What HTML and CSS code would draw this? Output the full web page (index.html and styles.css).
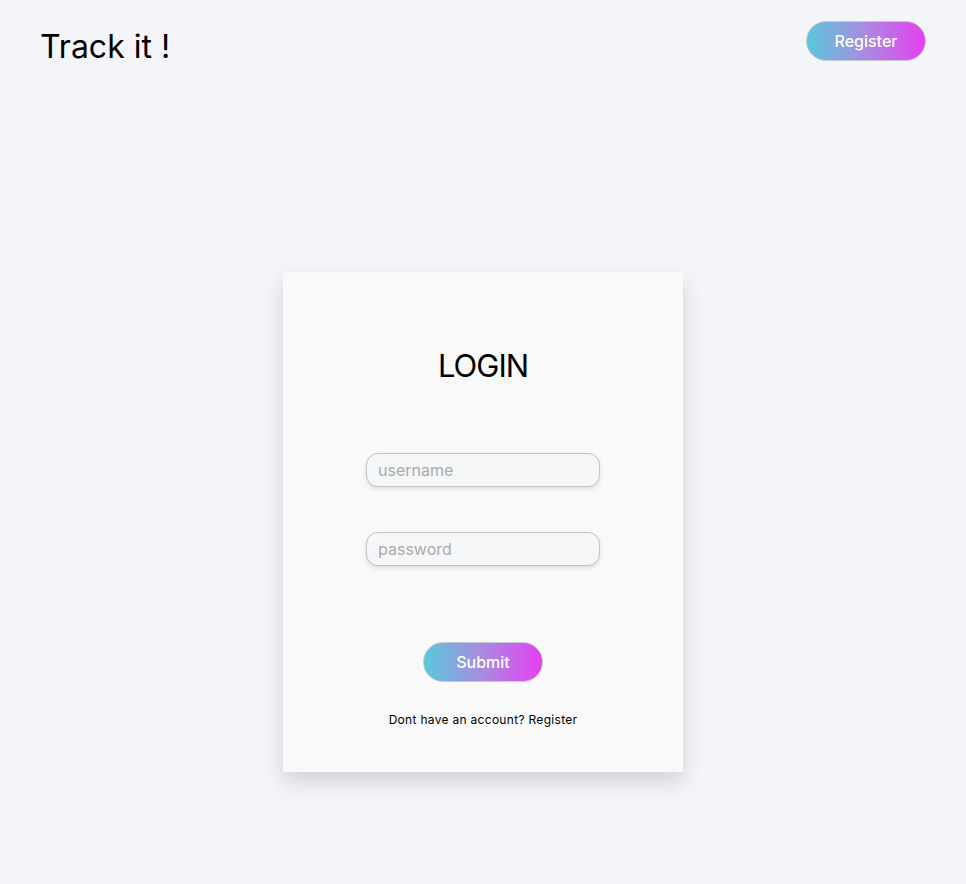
FILE: index.html
```html
<!DOCTYPE html>
<html>
<head>
<meta charset="utf-8">
<link rel="stylesheet" href="styles.css">
</head>
<body>
<header class="topbar">
  <h1 class="brand">Track it !</h1>
  <button class="pill-btn">Register</button>
</header>
<main class="main">
  <form class="card">
    <h2 class="card-title">LOGIN</h2>
    <input class="field" type="text" placeholder="username">
    <input class="field field-second" type="password" placeholder="password">
    <button class="pill-btn submit" type="button">Submit</button>
    <p class="hint">Dont have an account? Register</p>
  </form>
</main>
</body>
</html>
```

FILE: styles.css
```css
* { box-sizing: border-box; }
html, body {
  margin: 0;
  padding: 0;
  background: #f4f5f9;
  font-family: Inter, "Liberation Sans", sans-serif;
  color: #000;
}
body { min-height: 884px; }
.topbar {
  display: flex;
  justify-content: space-between;
  align-items: flex-start;
  padding: 21px 40px 0 40px;
  height: 272px;
}
.brand {
  margin: 6px 0 0 0;
  font-size: 32px;
  font-weight: 400;
  line-height: 40px;
}
.pill-btn {
  width: 120px;
  height: 40px;
  border-radius: 20px;
  border: 1px solid #c8c8d0;
  background: linear-gradient(90deg, #5ac8da 0%, #a98ae0 50%, #e63ff2 100%);
  color: #fff;
  font-family: inherit;
  font-size: 16px;
  font-weight: 500;
  cursor: pointer;
}
.main {
  display: flex;
  justify-content: center;
}
.card {
  width: 400px;
  height: 500px;
  background: #f9f9f9;
  box-shadow: 0 10px 20px rgba(0,0,0,0.14);
  display: flex;
  flex-direction: column;
  align-items: center;
  padding-top: 74px;
}
.card-title {
  margin: 0;
  font-size: 31px;
  font-weight: 400;
  line-height: 40px;
  letter-spacing: -1px;
}
.field {
  margin-top: 67px;
  width: 234px;
  height: 34px;
  border: 1px solid #c4c4c4;
  border-radius: 12px;
  background: #f5f6f8;
  box-shadow: 0 2px 4px rgba(0,0,0,0.12);
  padding: 0 11px;
  font-family: inherit;
  font-size: 16px;
  outline: none;
}
.field::placeholder { color: #ababab; }
.field-second { margin-top: 45px; }
.submit { margin-top: 76px; }
.hint {
  margin: 30px 0 0 0;
  font-size: 12px;
  line-height: 16px;
  letter-spacing: 0.3px;
}
```
